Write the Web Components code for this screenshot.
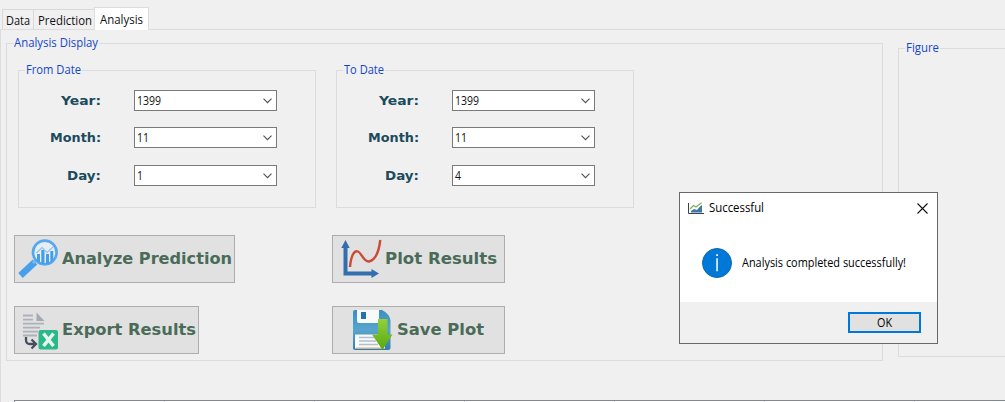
<!DOCTYPE html>
<html lang="en">
<head>
<meta charset="utf-8">
<title>Analysis</title>
<style>
html,body{margin:0;height:402px;overflow:hidden;background:#f0f0f0}
body{font:12px/16px "Open Sans","Noto Sans",sans-serif;color:#111}
</style>
</head>
<body>
<analysis-window></analysis-window>
<script>
const define = (name, html, setup) => customElements.define(name, class extends HTMLElement {
  connectedCallback() {
    if (this.shadowRoot) return;
    const root = this.attachShadow({mode: 'open'});
    root.innerHTML = html;
    if (setup) setup(this, root);
  }
});

/* A single-line label condensed or widened to its nominal width. */
define('ui-text', `<style>:host{display:inline-block;white-space:nowrap;flex:none}span{display:inline-block;transform-origin:0 50%}</style><span><slot></slot></span>`, (el, root) => {
  const want = +el.getAttribute('w');
  if (!want) return;
  el.style.width = want + 'px';
  requestAnimationFrame(() => {
    const s = root.querySelector('span');
    s.style.transform = `scaleX(${want / s.getBoundingClientRect().width})`;
  });
});

define('tab-item', `<style>
:host{display:flex;box-sizing:border-box;height:20px;border:1px solid #d9d9d9;border-bottom:0;border-right:0;padding:3px 0 0 3px;width:var(--w)}
:host([active]){height:23px;background:#fff;border-color:#dcdcdc;border-right:1px solid #dcdcdc;padding:4px 0 0 5px}
</style><slot></slot>`, el => el.style.setProperty('--w', el.getAttribute('width') + 'px'));

define('group-box', `<style>
:host{display:block;box-sizing:border-box;position:relative;border:1px solid #dcdcdc}
.legend{position:absolute;left:6px;top:-9px;background:#f0f0f0;padding:0 1px;color:#1646c8;display:flex}
</style><div class="legend"><slot name="legend"></slot></div><slot></slot>`);

define('combo-box', `<style>
:host{display:flex;box-sizing:border-box;width:143px;height:21px;border:1px solid #7a7a7a;background:#fff;align-items:center;justify-content:space-between;padding:0 4px 0 2px}
svg{display:block}
</style><slot></slot><svg width="9" height="6" viewBox="0 0 9 6"><path d="M.5.7 4.5 4.7 8.5.7" fill="none" stroke="#505050" stroke-width="1.1"/></svg>`);

define('date-row', `<style>
:host{display:grid;grid-template-columns:82px 143px;column-gap:33px;align-items:center;height:21px}
.l{font:bold 13px/20px "DejaVu Sans",sans-serif;color:#1b4b5c;justify-self:end;display:flex}
</style><div class="l"><slot name="label"></slot></div><combo-box><slot></slot></combo-box>`);

define('date-group', `<style>
:host{display:block;width:298px;height:138px}
group-box{height:138px}
.rows{display:flex;flex-direction:column;padding-top:19px}
date-row:nth-child(2){margin:16px 0 17px}
</style><group-box><ui-text slot="legend"></ui-text><div class="rows"></div></group-box>`, (el, root) => {
  const t = root.querySelector('ui-text').cloneNode();
  t.textContent = el.getAttribute('legend'); t.setAttribute('w', el.getAttribute('legend-width'));
  root.querySelector('ui-text').replaceWith(t);
  const v = el.getAttribute('values').split(',');
  root.querySelector('.rows').innerHTML = [['Year:', 40, 24], ['Month:', 51, 12], ['Day:', 34, 6]].map(([n, w, vw], i) =>
    `<date-row><ui-text slot="label" w="${w}">${n}</ui-text><ui-text w="${vw}">${v[i]}</ui-text></date-row>`).join('');
});

define('action-button', `<style>
:host{display:flex;box-sizing:border-box;height:48px;border:1px solid #adadad;background:#e1e1e1;align-items:center;font:bold 16.5px/24px "DejaVu Sans",sans-serif;color:#4a6b58}
::slotted(svg){display:block;flex:none}
</style><slot></slot>`);

define('table-top', `<style>
:host{display:flex;box-sizing:border-box;height:2px;border-top:1px solid #828790;border-left:1px solid #828790;background:#fff}
i{box-sizing:border-box;width:150px;flex:none;border-right:1px solid #d0d0d0}
i:last-child{border:0}
</style><i></i><i></i><i></i><i></i><i></i><i></i><i></i>`);

define('message-dialog', `<style>
:host{display:flex;flex-direction:column;box-sizing:border-box;width:259px;height:152px;border:1px solid #686868;background:#fff;color:#000}
header{display:flex;align-items:center;height:30px;padding:0 10px 0 8px}
header .x{margin:0 -1px 0 auto}
main{display:flex;align-items:center;height:79px;padding-left:22px;gap:10px}
footer{flex:1;display:flex;background:#f0f0f0;justify-content:flex-end;padding:10px 16px 0}
.ok{box-sizing:border-box;width:73px;height:21px;border:2px solid #0078d7;background:#e1e1e1;display:flex;align-items:center;justify-content:center}
svg{display:block;flex:none}
</style>
<header>
<svg width="16" height="12" viewBox="0 0 16 12"><path d="M.5 1V11.5H16" fill="none" stroke="#35454b"/><path d="M3 10.5V9L6 7 9 8 12 4.5 14 3V10.5Z" fill="#3d78a8"/><path d="M2 7 5.5 3.5 8 5 13.5.7" fill="none" stroke="#86ad58" stroke-width="1.2"/></svg>
<ui-text w="55" style="margin-left:5px">Successful</ui-text>
<svg class="x" width="11" height="11" viewBox="0 0 11 11"><path d="M.5.5 10.5 10.5M10.5.5.5 10.5" stroke="#111" stroke-width="1.1"/></svg>
</header>
<main>
<svg width="30" height="30" viewBox="0 0 30 30"><circle cx="15" cy="15" r="14.5" fill="#0078d7" stroke="#0869b0"/><path d="M14.2 6.2h1.8v1.9h-1.8zM14.3 10.3h1.5v13h-1.5z" fill="#fff"/></svg>
<ui-text></ui-text>
</main>
<footer><div class="ok"><ui-text w="15">OK</ui-text></div></footer>`, (el, root) => {
  const t = root.querySelector('main ui-text'), n = document.createElement('ui-text');
  n.setAttribute('w', '164'); n.textContent = el.getAttribute('message'); t.replaceWith(n);
});

define('analysis-window', `<style>
:host{display:flex;flex-direction:column;width:1005px;height:402px;box-sizing:border-box;padding-top:7px;overflow:hidden;background:#f0f0f0}
nav{display:flex;align-items:flex-end;height:22px;padding-left:2px;flex:none}
tab-item[active]{margin-bottom:-1px;position:relative}
.page{border-top:1px solid #dcdcdc;border-left:1px solid #dcdcdc;flex:1;display:flex;flex-direction:column}
.top{display:flex;height:370px;flex:none;align-items:flex-start;padding-left:5px}
.main{margin-top:13px;width:877px;height:318px;flex:none}
.figure{margin:18px 0 0 15px;width:120px;height:309px;flex:none}
.dates{display:flex;gap:20px;padding:26px 0 0 11px}
.actions{display:grid;grid-template-columns:318px 173px;grid-template-rows:48px 48px;row-gap:23px;padding:27px 0 0 7px;justify-items:start}
table-top{margin-left:13px;flex:none}
message-dialog{position:absolute;left:679px;top:192px}
</style>
<nav>
<tab-item width="31"><ui-text w="24">Data</ui-text></tab-item>
<tab-item width="61"><ui-text w="54" style="margin-left:1px">Prediction</ui-text></tab-item>
<tab-item active width="55"><ui-text w="43">Analysis</ui-text></tab-item>
</nav>
<div class="page">
<div class="top">
<group-box class="main"><ui-text slot="legend" w="84">Analysis Display</ui-text>
<div class="dates">
<date-group legend="From Date" legend-width="55" values="1399,11,1"></date-group>
<date-group legend="To Date" legend-width="40" values="1399,11,4"></date-group>
</div>
<div class="actions">
<action-button style="width:221px">
<svg width="47" height="46" viewBox="0 0 47 46"><path d="M5.5 39.5 20 26" stroke="#48a0ed" stroke-width="6.5"/><path d="M18 27 22 23" stroke="#76b8ef" stroke-width="3"/><circle cx="29.8" cy="16.5" r="11.8" fill="#e6edf3" stroke="#55a8f0" stroke-width="2.7"/><path d="M22 25V18h3v9zM26.3 28V14h3.2v14zM31 28V18h3v10zM35.3 26V15h3v9z" fill="#489ee5"/><path d="M21.5 17 27 11.5 32 16.5 38 11" fill="none" stroke="#8ec4ef" stroke-width="1.2"/></svg>
<ui-text w="170">Analyze Prediction</ui-text></action-button>
<action-button style="width:173px">
<svg width="52" height="46" viewBox="0 0 52 46"><path d="M12.5 9V37.5H41" fill="none" stroke="#336fae" stroke-width="4"/><path d="M12.5 4 8.3 12h8.4zM46 37.5 38.5 33v9z" fill="#336fae"/><path d="M17 31C18 20 21 14 25 15.5 29 17 30 26 36 25.5 43 24 46 15 47.3 4" fill="none" stroke="#cc4b35" stroke-width="2.4"/></svg>
<ui-text w="112">Plot Results</ui-text></action-button>
<action-button style="width:185px">
<svg width="47" height="46" viewBox="0 0 47 46"><path d="M8 8.5H18M8 12.7H18M8 16.7H29M8 20.7H25M8 24.7H23M8 28.5H22" stroke="#afb1b8" stroke-width="1.8"/><path d="M21.5 5.5 29.5 14h-8z" fill="#a6a9b1"/><path d="M11 30V33Q11 37 15 37H20M16.5 32.5 21 37 16.5 41.5" fill="none" stroke="#46505c" stroke-width="2.3"/><rect x="23.5" y="23" width="19.5" height="19.5" rx="2" fill="#2cb78b"/><path d="M28.5 26.5 38.5 39M38.5 26.5 28.5 39" stroke="#e5f5ed" stroke-width="3.6"/></svg>
<ui-text w="134">Export Results</ui-text></action-button>
<action-button style="width:173px">
<svg width="64" height="46" viewBox="0 0 64 46"><defs><linearGradient id="b" x2="0" y2="1"><stop stop-color="#3b8fc0"/><stop offset=".5" stop-color="#58a5cc"/><stop offset="1" stop-color="#307cae"/></linearGradient><linearGradient id="g" x2="0" y2="1"><stop stop-color="#91d13a"/><stop offset="1" stop-color="#58a80d"/></linearGradient></defs><path d="M22 3H49Q57 7 57.5 14V41Q57.5 43 55 43H22Q20 43 20 41V5Q20 3 22 3Z" fill="url(#b)"/><path d="M24 3H46V14Q46 16 44 16H26Q24 16 24 14Z" fill="#f7f9fb"/><path d="M28 5h5v7h-5z" fill="#2672a6"/><path d="M22 27.5H52V41.5H22z" fill="#fafafa"/><path d="M26 30.5H44M26 34H43M26 37.5H45" stroke="#aebed0" stroke-width="1.4"/><path d="M23 41H49" stroke="#e5b35c" stroke-width="1"/><path d="M45 12H54.5V27.5H59.5L49.5 43 39 27.5H45Z" fill="url(#g)"/></svg>
<ui-text w="87">Save Plot</ui-text></action-button>
</div>
</group-box>
<group-box class="figure"><ui-text slot="legend" w="33">Figure</ui-text></group-box>
</div>
<table-top></table-top>
</div>
<message-dialog message="Analysis completed successfully!"></message-dialog>`);
</script>
</body>
</html>
